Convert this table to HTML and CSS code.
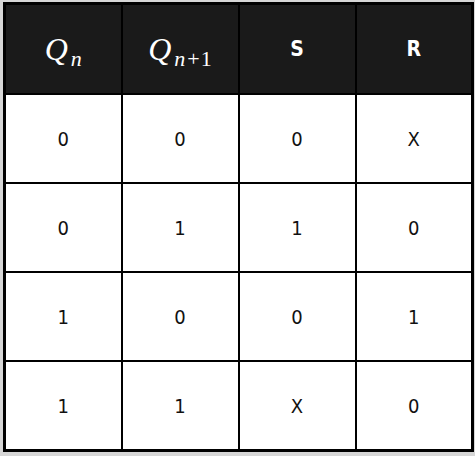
FILE: index.html
```html
<!DOCTYPE html>
<html>
<head>
<meta charset="utf-8">
<link rel="stylesheet" href="styles.css">
</head>
<body>
<div class="frame">
<table class="truth">
  <thead>
    <tr>
      <th class="math"><span class="mi">Q</span><span class="sub"><span class="mi">n</span></span></th>
      <th class="math"><span class="mi">Q</span><span class="sub"><span class="mi">n</span><span class="op">+</span>1</span></th>
      <th class="lbl">S</th>
      <th class="lbl">R</th>
    </tr>
  </thead>
  <tbody>
    <tr><td>0</td><td>0</td><td>0</td><td>X</td></tr>
    <tr><td>0</td><td>1</td><td>1</td><td>0</td></tr>
    <tr><td>1</td><td>0</td><td>0</td><td>1</td></tr>
    <tr><td>1</td><td>1</td><td>X</td><td>0</td></tr>
  </tbody>
</table>
</div>
</body>
</html>
```
FILE: styles.css
```css
html, body {
  margin: 0;
  padding: 0;
  background: #d6d6d6;
}
.frame {
  padding: 2px 1px 4px 3px;
  width: 471px;
}
.truth {
  width: 471px;
  border-collapse: collapse;
  table-layout: fixed;
  border: 3px solid #000;
  background: #fff;
}
.truth th, .truth td {
  border: 2px solid #000;
  text-align: center;
  vertical-align: middle;
  padding: 0;
}
.truth th {
  height: 88px;
  background: #1a1a1a;
  color: #fff;
}
.truth td {
  height: 87px;
  font-family: "DejaVu Sans", sans-serif;
  font-stretch: condensed;
  font-size: 20px;
  color: #111;
}
.lbl {
  font-family: "DejaVu Sans", sans-serif;
  font-stretch: condensed;
  font-weight: bold;
  font-size: 21px;
}
.math {
  font-family: "Liberation Serif", "DejaVu Serif", serif;
  font-weight: normal;
  font-size: 32px;
  white-space: nowrap;
}
.mi {
  font-style: italic;
}
.sub {
  font-size: 22px;
  position: relative;
  top: 6px;
  margin-left: 3px;
}
.op {
  margin: 0 1px 0 2px;
}
```
